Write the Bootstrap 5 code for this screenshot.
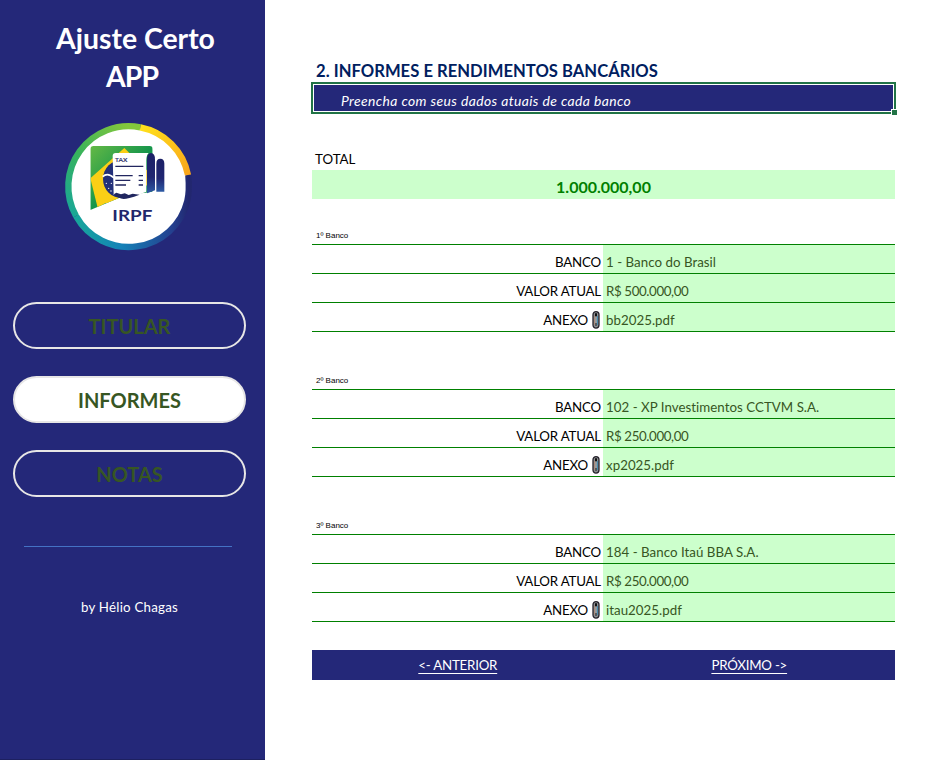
<!DOCTYPE html>
<html lang="pt-BR">
<head>
<meta charset="utf-8">
<meta name="viewport" content="width=device-width, initial-scale=1">
<title>Ajuste Certo APP</title>
<link href="https://cdn.jsdelivr.net/npm/bootstrap@5.3.0/dist/css/bootstrap.min.css" rel="stylesheet">
<style>
  :root { --navy: #242879; --mint: #ccffcc; --line: #008000; }
  body { font-family: Lato, "Liberation Sans", sans-serif; font-size: 13.3px; line-height: 20px; color: #000; height: 760px; overflow: hidden; }
  .side { width: 265px; height: 760px; background: var(--navy); border-bottom: 1px solid #1d2060; }
  .brand { font-size: 28.4px; line-height: 38px; font-weight: 700; padding: 19px 0 0 6px; margin: 0; }
  .brand-sub { letter-spacing: -.9px; padding-right: 7px; }
  .logo { width: 145px; height: 140px; margin: 20px 0 0 55px; }
  .menu { margin: 47px 19px 0 13px; gap: 27px; }
  .menu .btn { height: 47px; border: 2px solid #e7e6e6; border-radius: 24px; color: #375623; font-size: 20px; line-height: 44px; font-weight: 700; padding: 0; }
  .menu .btn.active { background: #fff; color: #375623; border-color: #e7e6e6; }
  .rule { height: 1px; margin: 49px 33px 0 24px; background: #4472c4; }
  .by { padding: 50px 6px 0 0; letter-spacing: .24px; }
  .sheet { width: 583px; margin-left: 47px; }
  .sheet h1 { font-size: 16.6px; line-height: 22px; font-weight: 700; color: #002060; margin: 60px 0 0; padding-left: 4px; letter-spacing: .03px; }
  .hint { margin: 0 -1px; height: 32px; border: 2px solid #217346; padding: 1px; background: var(--navy); background-clip: content-box; color: #fff; font-style: italic; }
  .hint::before { content: ""; position: absolute; inset: 0; border: 1px solid #fff; }
  .hint span { padding: 5px 0 0 27px; line-height: 22px; font-size: 13.9px; letter-spacing: .4px; }
  .grip { right: -3px; bottom: -3px; width: 6px; height: 6px; background: #217346; border: solid #fff; border-width: 1px 0 0 1px; }
  .total-label { margin-top: 35px; padding-left: 3px; line-height: 21px; }
  .total { height: 29px; margin-bottom: 29px; background: var(--mint); color: var(--line); font-weight: 700; font-size: 16px; line-height: 34px; }
  .bank { padding-bottom: 28px; }
  .bank + .bank { padding-top: 13px; }
  .bank-name { font-family: "Liberation Sans", sans-serif; font-size: 8px; line-height: 10px; height: 16px; padding: 3px 0 0 4px; }
  .line { height: 29px; border-top: 1px solid var(--line); line-height: 35px; }
  .line:last-child { height: 30px; border-bottom: 1px solid var(--line); }
  .key { width: 291px; padding-right: 2px; letter-spacing: -.2px; }
  .val { background: var(--mint); color: #375623; padding-left: 3px; letter-spacing: .03px; }
  .money { letter-spacing: -.38px; }
  .clip { width: 8px; height: 18px; margin: 8px 1px 0 4px; }
  .pager { height: 30px; background: var(--navy); line-height: 31px; letter-spacing: -.22px; }
  .pager a { color: #fff; text-underline-offset: 3px; text-decoration-thickness: 1px; }
</style>
</head>
<body class="d-flex bg-white">
<svg width="0" height="0" class="position-absolute" aria-hidden="true">
  <symbol id="clip" viewBox="0 0 8 18">
    <rect x="1" y=".7" width="6" height="16.4" rx="3" fill="#8d9093" stroke="#25222a" stroke-width="1.3"/>
    <path d="M2.6 5v8.5" stroke="#b08a78" fill="none"/><path d="M5.4 5v9" stroke="#3f8bb0" fill="none"/>
    <path d="M3 2.2h2v3H3z" fill="#111"/><path d="M4 6v6" stroke="#9aa4a8"/><path d="M4 12v3" stroke="#222"/>
  </symbol>
</svg>
<aside class="side flex-shrink-0 text-white">
  <h2 class="brand text-center">Ajuste Certo<br><span class="brand-sub">APP</span></h2>
  <svg class="logo d-block" viewBox="0 0 435 420" role="img" aria-label="IRPF">
    <defs>
      <linearGradient id="gl" x1="0" y1="1" x2=".8" y2="0"><stop offset="0" stop-color="#17a69b"/><stop offset=".5" stop-color="#38b35b"/><stop offset="1" stop-color="#83c83c"/></linearGradient>
      <linearGradient id="gy" x1="0" y1="0" x2="1" y2="1"><stop offset="0" stop-color="#ffe11b"/><stop offset="1" stop-color="#f9a51b"/></linearGradient>
      <linearGradient id="gb" x1="0" y1="0" x2="1" y2="0"><stop offset="0" stop-color="#17a69b"/><stop offset=".4" stop-color="#1482b8"/><stop offset=".85" stop-color="#24408f"/><stop offset="1" stop-color="#22276f"/></linearGradient>
      <linearGradient id="gf" x1="0" y1="0" x2="1" y2="1"><stop offset="0" stop-color="#69bb45"/><stop offset=".5" stop-color="#16964b"/><stop offset="1" stop-color="#118a48"/></linearGradient>
      <linearGradient id="gr" x1="0" y1="0" x2="0" y2="1"><stop offset="0" stop-color="#1c2166"/><stop offset=".6" stop-color="#202672"/><stop offset="1" stop-color="#2d5aa4"/></linearGradient>
      <clipPath id="flag"><path d="M106 103q0-10 10-10h168q9 0 9 10v128L215 239 106 285z"/></clipPath>
    </defs>
    <circle cx="221" cy="215" r="176" fill="#fff"/>
    <g fill="none" stroke-width="19">
      <path d="M63 303A181 181 0 0 1 256 37" stroke="url(#gl)"/>
      <path d="M63 303A181 181 0 0 0 397 258Q404 230 400 180" stroke="url(#gb)"/>
      <path d="M256 37A181 181 0 0 1 399 180" stroke="url(#gy)"/>
    </g>
    <g clip-path="url(#flag)">
      <path d="M100 88h200v202H100z" fill="url(#gf)"/>
      <path d="M106 190 208 99 300 190 205 270 152 264 128 278z" fill="#fbcf16"/>
      <circle cx="202" cy="192" r="58" fill="#233079"/>
      <path d="M143 185q15-14 34 4" stroke="#fff" stroke-width="5" fill="none"/>
    </g>
    <g fill="#fff"><circle cx="154" cy="205" r="2"/><circle cx="161" cy="220" r="2"/><circle cx="169" cy="205" r="2"/><circle cx="168" cy="228" r="2"/></g>
    <path d="M300 228Q244 240 177 268v18l125-38z" fill="#fff"/>
    <path d="M173 123q0-9 9-9h99q-7 7-7 22v94l-18 7-11 7-11-7-12 6-11-7-12 8-11-8-12 4z" fill="#fff"/>
    <path d="M176 238l8-5 14 5 11-3 12 5 12-4 10 2 11 1q-37 13-48 13-16-1-30-14z" fill="#20265f"/>
    <path d="M276 235V134q0-20 12-20t12 20v92z" fill="url(#gr)"/>
    <path d="M304 230v-84q0-15 12-15t12 15v84z" fill="url(#gr)"/>
    <g stroke="#22265f" stroke-width="4"><path d="M181 154h84M181 182h52M251 182h13M181 196h45M251 196h13M181 210h32M251 210h13"/></g>
    <text x="180" y="142" font-family="Lato, sans-serif" font-size="19" fill="#22265f" stroke="#22265f" stroke-width=".5" textLength="37" lengthAdjust="spacingAndGlyphs">TAX</text>
    <text x="172" y="319" font-family="Lato, sans-serif" font-weight="700" font-size="45" fill="#22276b" textLength="120" lengthAdjust="spacingAndGlyphs">IRPF</text>
  </svg>
  <nav class="menu d-flex flex-column">
    <a class="btn" href="#">TITULAR</a>
    <a class="btn active" href="#">INFORMES</a>
    <a class="btn" href="#">NOTAS</a>
  </nav>
  <div class="rule"></div>
  <p class="by text-center mb-0">by Hélio Chagas</p>
</aside>
<main class="sheet">
  <h1>2. INFORMES E RENDIMENTOS BANCÁRIOS</h1>
  <div class="hint position-relative d-flex"><span>Preencha com seus dados atuais de cada banco</span><i class="grip position-absolute"></i></div>
  <div class="total-label">TOTAL</div>
  <div class="total text-center">1.000.000,00</div>
  <section class="bank">
    <div class="bank-name">1º Banco</div>
    <div class="line d-flex"><div class="key text-end">BANCO</div><div class="val flex-fill">1 - Banco do Brasil</div></div>
    <div class="line d-flex"><div class="key text-end">VALOR ATUAL</div><div class="val money flex-fill">R$ 500.000,00</div></div>
    <div class="line d-flex"><div class="key d-flex justify-content-end">ANEXO<svg class="clip"><use href="#clip"/></svg></div><div class="val flex-fill">bb2025.pdf</div></div>
  </section>
  <section class="bank">
    <div class="bank-name">2º Banco</div>
    <div class="line d-flex"><div class="key text-end">BANCO</div><div class="val flex-fill">102 - XP Investimentos CCTVM S.A.</div></div>
    <div class="line d-flex"><div class="key text-end">VALOR ATUAL</div><div class="val money flex-fill">R$ 250.000,00</div></div>
    <div class="line d-flex"><div class="key d-flex justify-content-end">ANEXO<svg class="clip"><use href="#clip"/></svg></div><div class="val flex-fill">xp2025.pdf</div></div>
  </section>
  <section class="bank">
    <div class="bank-name">3º Banco</div>
    <div class="line d-flex"><div class="key text-end">BANCO</div><div class="val flex-fill">184 - Banco Itaú BBA S.A.</div></div>
    <div class="line d-flex"><div class="key text-end">VALOR ATUAL</div><div class="val money flex-fill">R$ 250.000,00</div></div>
    <div class="line d-flex"><div class="key d-flex justify-content-end">ANEXO<svg class="clip"><use href="#clip"/></svg></div><div class="val flex-fill">itau2025.pdf</div></div>
  </section>
  <nav class="pager d-flex text-center"><div class="w-50"><a href="#">&lt;- ANTERIOR</a></div><div class="w-50"><a href="#">PRÓXIMO -&gt;</a></div></nav>
</main>
<script src="https://cdn.jsdelivr.net/npm/bootstrap@5.3.0/dist/js/bootstrap.bundle.min.js"></script>
</body>
</html>
